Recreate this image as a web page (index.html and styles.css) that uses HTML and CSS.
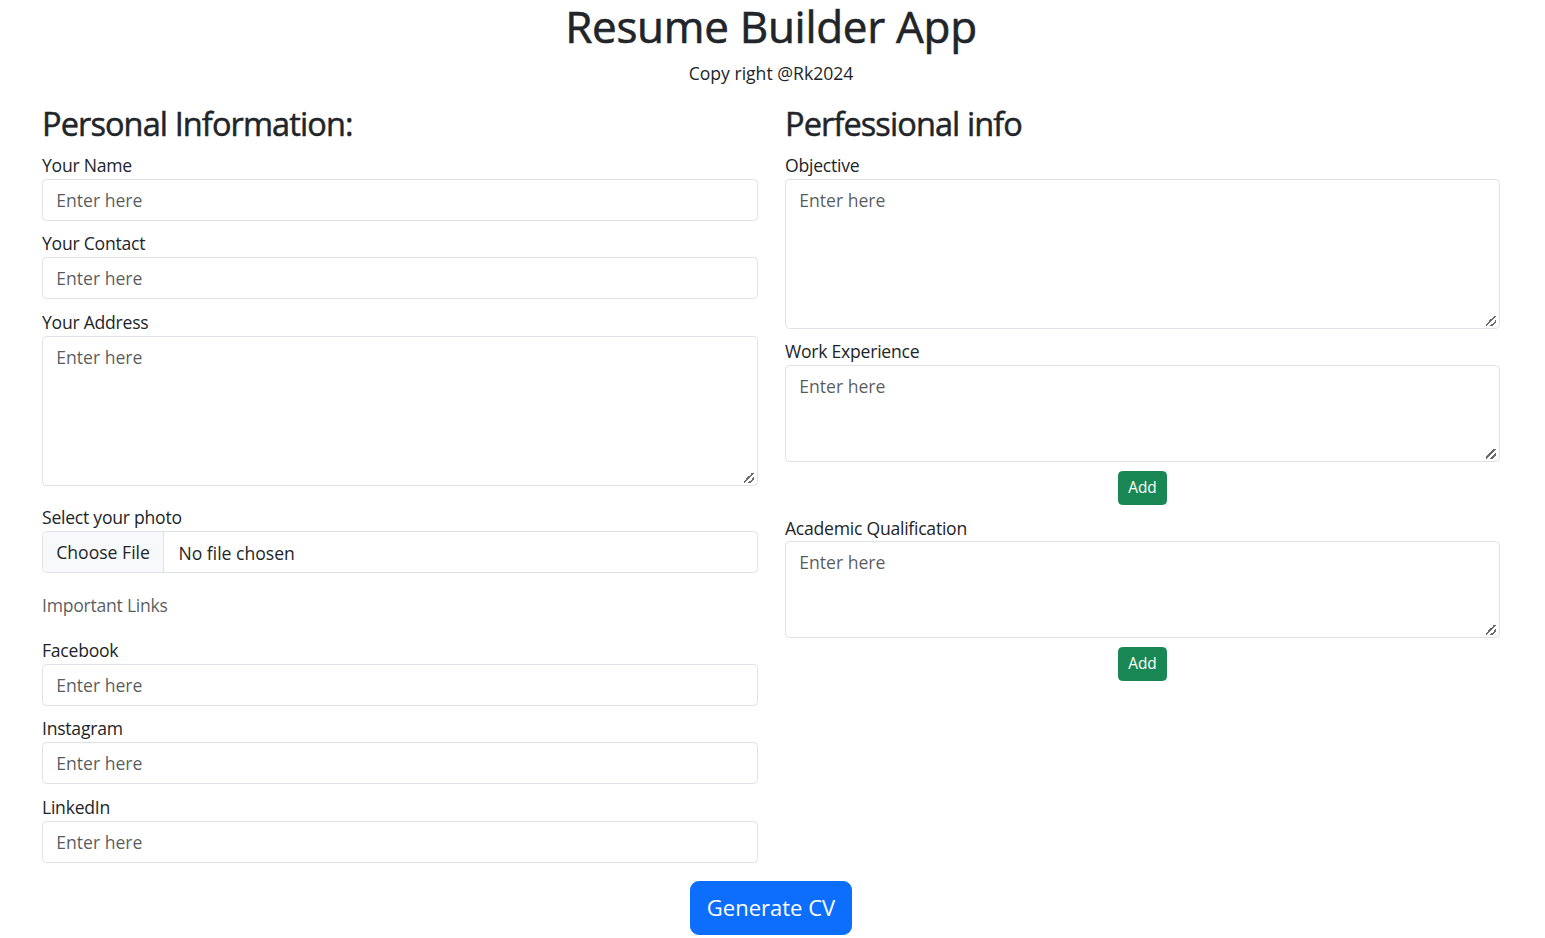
FILE: index.html
```html
<!DOCTYPE html>
<html lang="en">
<head>
<meta charset="utf-8">
<title>Resume Builder App</title>
<link rel="stylesheet" href="styles.css">
</head>
<body>
<div class="page">
  <header class="hero">
    <h1 class="title">Resume Builder App</h1>
    <p class="copy">Copy right @Rk2024</p>
  </header>

  <main class="columns">
    <section class="col">
      <h2 class="heading">Personal Information:</h2>

      <div class="field">
        <label class="label" for="name">Your Name</label>
        <input class="control" id="name" type="text" placeholder="Enter here">
      </div>
      <div class="field field-gap">
        <label class="label" for="contact">Your Contact</label>
        <input class="control" id="contact" type="text" placeholder="Enter here">
      </div>
      <div class="field field-wide">
        <label class="label" for="address">Your Address</label>
        <textarea class="control area-tall" id="address" placeholder="Enter here"></textarea>
      </div>
      <div class="field field-wider">
        <label class="label" for="photo">Select your photo</label>
        <input class="control file" id="photo" type="file">
      </div>

      <p class="muted">Important Links</p>

      <div class="field">
        <label class="label" for="fb">Facebook</label>
        <input class="control" id="fb" type="text" placeholder="Enter here">
      </div>
      <div class="field field-gap">
        <label class="label" for="ig">Instagram</label>
        <input class="control" id="ig" type="text" placeholder="Enter here">
      </div>
      <div class="field field-last">
        <label class="label" for="li">LinkedIn</label>
        <input class="control" id="li" type="text" placeholder="Enter here">
      </div>
    </section>

    <section class="col">
      <h2 class="heading">Perfessional info</h2>

      <div class="field">
        <label class="label" for="obj">Objective</label>
        <textarea class="control area-tall" id="obj" placeholder="Enter here"></textarea>
      </div>
      <div class="field-plain">
        <label class="label" for="we">Work Experience</label>
        <textarea class="control area-short" id="we" placeholder="Enter here"></textarea>
      </div>
      <div class="add-row add-row-first">
        <button class="btn-add" type="button">Add</button>
      </div>
      <div class="field-plain">
        <label class="label" for="aq">Academic Qualification</label>
        <textarea class="control area-short" id="aq" placeholder="Enter here"></textarea>
      </div>
      <div class="add-row">
        <button class="btn-add" type="button">Add</button>
      </div>
    </section>
  </main>

  <div class="actions">
    <button class="btn-generate" type="button">Generate CV</button>
  </div>
</div>
</body>
</html>
```

FILE: styles.css
```css
* {
  box-sizing: border-box;
}

body {
  margin: 0;
  font-family: "Open Sans", "Noto Sans", "DejaVu Sans", sans-serif;
  font-size: 17.6px;
  line-height: 1.5;
  letter-spacing: -0.25px;
  color: #212529;
  background: #ffffff;
}

.page {
  width: 1458px;
  margin-left: 42px;
}

.hero {
  text-align: center;
}

.title {
  margin: 0 0 7px;
  font-size: 44px;
  font-weight: 400;
  line-height: 52.8px;
  letter-spacing: -0.3px;
  -webkit-text-stroke: 0.6px #212529;
}

.copy {
  margin: 0 0 15px;
  letter-spacing: 0;
}

.columns {
  display: grid;
  grid-template-columns: 716px 715px;
  column-gap: 27px;
  align-items: start;
}

.heading {
  margin: 0 0 6.8px;
  padding-top: 2px;
  font-size: 32.5px;
  font-weight: 400;
  line-height: 42.24px;
  letter-spacing: -0.9px;
  -webkit-text-stroke: 0.5px #212529;
}

.label {
  display: block;
  height: 26.4px;
}

.field {
  margin-bottom: 9.6px;
}

.field-gap {
  margin-bottom: 10.6px;
}

.field-wide {
  margin-bottom: 18.6px;
}

.field-wider {
  margin-bottom: 19.6px;
}

.field-last {
  margin-bottom: 0;
}

.control {
  display: block;
  width: 100%;
  height: 42px;
  padding: 7.15px 13.2px;
  font: inherit;
  line-height: 26.4px;
  color: #212529;
  background: #ffffff;
  border: 1.1px solid #dee2e6;
  border-radius: 4.4px;
  outline: none;
}

.control::placeholder {
  color: rgba(33, 37, 41, 0.75);
  opacity: 1;
}

textarea.control {
  resize: vertical;
}

textarea.control::-webkit-resizer {
  background: linear-gradient(135deg,
      transparent 40%, #6b6b6b 40%, #6b6b6b 52%, transparent 52%,
      transparent 70%, #6b6b6b 70%, #6b6b6b 82%, transparent 82%)
    no-repeat right 3px bottom 2px / 10px 10px;
}

.area-tall {
  height: 150px;
}

.area-short {
  height: 97px;
}

.file {
  overflow: hidden;
}

.file::file-selector-button {
  padding: 7.15px 13.2px;
  margin: -7.15px 14.3px -7.15px -13.2px;
  height: 42px;
  font: inherit;
  color: #212529;
  background: #f8f9fa;
  border: 0;
  border-right: 1.1px solid #dee2e6;
  border-radius: 0;
}

.muted {
  margin: 0 0 18.6px;
  height: 26.4px;
  color: rgba(33, 37, 41, 0.75);
}

.add-row {
  display: flex;
  justify-content: center;
  margin: 9px 0 9px;
}

.add-row-first {
  margin-bottom: 10px;
}

.btn-add {
  height: 34px;
  padding: 4.4px 8.8px;
  font: inherit;
  font-size: 15.4px;
  line-height: 23.1px;
  color: #ffffff;
  background: #198754;
  border: 1.1px solid #198754;
  border-radius: 4.4px;
}

.actions {
  display: flex;
  justify-content: center;
  margin-top: 18px;
}

.btn-generate {
  height: 54px;
  padding: 9.5px 16px;
  font: inherit;
  font-size: 22px;
  line-height: 33px;
  color: #ffffff;
  background: #0d6efd;
  border: 1.1px solid #0d6efd;
  border-radius: 8.8px;
}
```
